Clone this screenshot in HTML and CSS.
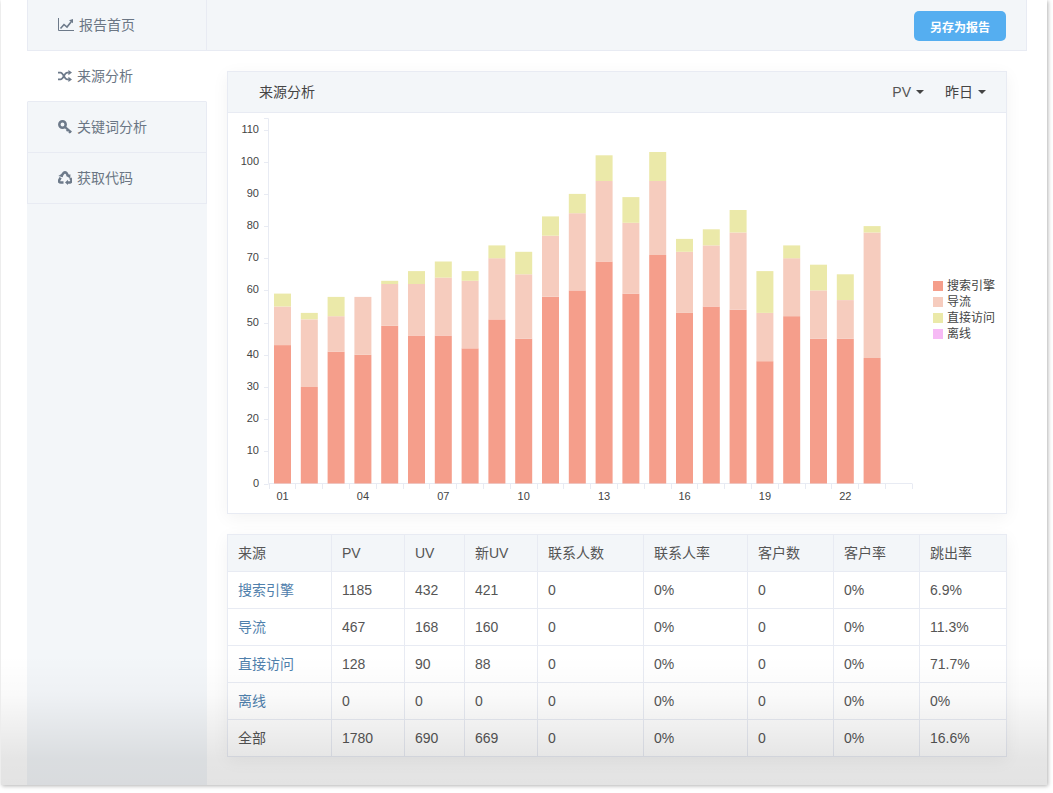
FILE: index.html

```html
<!DOCTYPE html>
<html lang="zh-CN">
<head>
  <meta charset="UTF-8" />
  <title>来源分析</title>
  <link rel="stylesheet" href="styles.css">
</head>
<body>
<div class="window">
  <div class="sidebar">
    <a class="nav-item nav-first">
      <svg class="icon icon-wide" viewBox="0 0 16 13"><path d="M.5 0v12.5H16" fill="none" stroke="currentColor"/><path d="M2.5 10.5 6 6.5l3 2.5 4.2-5.2" fill="none" stroke="currentColor" stroke-width="1.6"/><path d="M11 2.2 15 1v4.2z" fill="currentColor"/></svg>
      报告首页
    </a>
    <a class="nav-item active">
      <svg class="icon" viewBox="0 0 14 12"><path d="M0 2.6h2.6c2.8 0 3.6 6.8 6.6 6.8h1.6M0 9.4h2.6c2.8 0 3.6-6.8 6.6-6.8h1.6" fill="none" stroke="currentColor" stroke-width="1.9"/><path d="M10.4 0 14 2.6l-3.600 2.600zM10.400 6.800 14 9.400 10.400 12z" fill="currentColor"/></svg>
      来源分析
    </a>
    <a class="nav-item">
      <svg class="icon" viewBox="0 0 14 14"><circle cx="4.500" cy="4.500" r="3.200" fill="none" stroke="currentColor" stroke-width="2.500"/><path d="m7 7 6.200 5.400" stroke="currentColor" stroke-width="2.300"/><path d="m10 9.500-1.300 1.700M12.300 11.300l-1.200 1.800" stroke="currentColor" stroke-width="1.700"/></svg>
      关键词分析
    </a>
    <a class="nav-item">
      <svg class="icon" viewBox="0 0 14 14"><g fill="none" stroke="currentColor" stroke-width="2.500"><path d="M3.200 5.400 5.500 2q1.500-1.200 3 0l1.500 2.600"/><path d="m12.300 7 1 2q.7 2-1.300 2.500h-2"/><path d="M5.500 11.600H3q-2.500-.1-1.800-2.400l1.400-2.600"/></g><g fill="currentColor"><path d="m7.800 4.800 4.600-1.600v4.200z"/><path d="M10 8.800v5.200l-3-2.500z"/><path d="m.3 5 4.700 1.300-.8-3.800z"/></g></svg>
      获取代码
    </a>
    <div class="nav-fill"></div>
  </div>

  <div class="main">
    <div class="topbar">
      <button class="save-btn">另存为报告</button>
    </div>

    <div class="panel chart-panel">
      <div class="panel-head">
        <span class="panel-title">来源分析</span>
        <span class="dropdown">PV<i class="caret"></i></span>
        <span class="dropdown dropdown-date">昨日<i class="caret"></i></span>
      </div>
      <svg id="chart" class="chart" viewBox="228 113 778 400"></svg>
    </div>

    <table class="panel report">
      <colgroup>
        <col class="c-source"><col class="c-pv"><col class="c-uv"><col class="c-new">
        <col class="c-contact"><col class="c-rate"><col class="c-cust"><col class="c-crate"><col class="c-bounce">
      </colgroup>
      <thead>
        <tr><th>来源</th><th>PV</th><th>UV</th><th>新UV</th><th>联系人数</th><th>联系人率</th><th>客户数</th><th>客户率</th><th>跳出率</th></tr>
      </thead>
      <tbody>
        <tr><td><a>搜索引擎</a></td><td>1185</td><td>432</td><td>421</td><td>0</td><td>0%</td><td>0</td><td>0%</td><td>6.9%</td></tr>
        <tr><td><a>导流</a></td><td>467</td><td>168</td><td>160</td><td>0</td><td>0%</td><td>0</td><td>0%</td><td>11.3%</td></tr>
        <tr><td><a>直接访问</a></td><td>128</td><td>90</td><td>88</td><td>0</td><td>0%</td><td>0</td><td>0%</td><td>71.7%</td></tr>
        <tr><td><a>离线</a></td><td>0</td><td>0</td><td>0</td><td>0</td><td>0%</td><td>0</td><td>0%</td><td>0%</td></tr>
        <tr><td>全部</td><td>1780</td><td>690</td><td>669</td><td>0</td><td>0%</td><td>0</td><td>0%</td><td>16.6%</td></tr>
      </tbody>
    </table>
  </div>

  <div class="fade"></div>
</div>
<script src="chart.js"></script>
</body>
</html>
```

FILE: styles.css

```css
html, body { margin: 0; padding: 0; height: 100%; overflow: hidden; background: white; }
body { font-family: "Liberation Sans", "Noto Sans CJK SC", sans-serif; font-size: 14px; line-height: 20px; color: #555; }

.window { position: relative; display: flex; width: 1046px; height: 785px; margin-left: 1px; background: white; box-shadow: 1px 1px 4px rgba(0,0,0,.3); overflow: hidden; }
.fade { position: absolute; left: 0; right: 0; bottom: 0; height: 130px; background: linear-gradient(rgba(0,0,0,0), rgba(0,0,0,.02) 30%, rgba(0,0,0,.1) 80%, rgba(0,0,0,.11)); pointer-events: none; }

.sidebar { display: flex; flex-direction: column; width: 180px; margin-left: 26px; }
.nav-item { box-sizing: border-box; display: flex; align-items: center; gap: 5px; height: 51px; padding: 0 0 1px 30px; color: #6b7684; background: #f3f6f9; border: 1px solid #e8ebf3; border-width: 0 1px 1px; }
.nav-item.active { background: white; border-left-color: white; border-right-color: white; }
.nav-fill { flex: 1; background: #f3f6f9; }
.icon { width: 14px; height: 14px; color: #6d7a8a; }
.icon-wide { width: 16px; height: 13px; }

.main { flex: 1; padding-right: 20px; }
.topbar { box-sizing: border-box; display: flex; justify-content: flex-end; align-items: flex-start; height: 51px; padding: 11px 20px 0 0; background: #f3f6f9; border: 1px solid #e8ebf3; border-width: 0 1px 1px 0; }
.save-btn { width: 92px; height: 30px; padding: 0; background: #55aef0; color: white; font: bold 12px "Liberation Sans", "Noto Sans CJK SC", sans-serif; border: none; border-radius: 5px; }

.panel { box-sizing: border-box; width: 780px; margin: 20px 0 0 20px; background: white; border: 1px solid #e8ebf3; box-shadow: 0 4px 16px rgba(0,0,0,.05); }
.panel-head { box-sizing: border-box; display: flex; align-items: center; height: 41px; padding: 0 20px 1px 31px; background: #f3f6f9; border-bottom: 1px solid #e8ebf3; }
.panel-title { flex: 1; color: #444; }
.dropdown { display: flex; align-items: center; gap: 5px; color: #555; }
.dropdown-date { margin-left: 21px; color: #444; }
.caret { width: 0; height: 0; border: 4px solid transparent; border-top-color: #444; border-bottom: 0; }

.chart { display: block; width: 778px; height: 400px; }
.axis { stroke: #e8ebf3; stroke-width: 1; fill: none; }
.tick-label { font-size: 11px; fill: #444; }
.legend-label { font-size: 12px; fill: #444; }

.report { border-collapse: collapse; table-layout: fixed; }
.report th, .report td { box-sizing: border-box; height: 37px; padding: 0 10px 1px; text-align: left; font-weight: normal; border: 1px solid #e8ebf3; }
.report th { background: #f3f6f9; color: #555; }
.report a { color: #4f80ac; }
.c-source { width: 104px; }
.c-pv { width: 73px; }
.c-uv { width: 60px; }
.c-new { width: 73px; }
.c-contact { width: 106px; }
.c-rate { width: 104px; }
.c-cust { width: 86px; }
.c-crate { width: 86px; }
.c-bounce { width: 87px; }
```

FILE: chart.js

```js
// search, guide, direct
const data = [
  [43,12,4],[30,21,2],[41,11,6],[40,18,0],[49,13,1],[46,16,4],[46,18,5],[42,21,3],
  [51,19,4],[45,20,7],[58,19,6],[60,24,6],[69,25,8],[59,22,8],[71,23,9],[53,19,4],
  [55,19,5],[54,24,7],[38,15,13],[52,18,4],[45,15,8],[45,12,8],[39,39,2]
];
const colors = ["#f59e8b", "#f6ccbe", "#ebe9a9"];
const legend = [["搜索引擎", "#f59e8b"], ["导流", "#f6ccbe"], ["直接访问", "#ebe9a9"], ["离线", "#f6baf5"]];

const baseY = 483.5;
const unit = 3.218;
const left = 268.5;
const band = 26.8;

let out = "";
out += `<path class="axis" d="M264 118.500H${left}V${baseY}H912"/>`;

for (let v = 0; v <= 110; v += 10) {
  const y = Math.round(baseY - v * unit) + 0.5;
  out += `<path class="axis" d="M264 ${y}H${left}"/>`;
  out += `<text class="tick-label" x="259" y="${y + 2}" text-anchor="end">${v}</text>`;
}

for (let i = 0; i <= 24; i++) {
  const x = Math.round(left + i * band) + 0.5;
  out += `<path class="axis" d="M${x} ${baseY}V489"/>`;
}

data.forEach((row, i) => {
  const x = left + 5.5 + i * band;
  let total = 0;
  row.forEach((v, k) => {
    if (!v) return;
    total += v;
    out += `<rect x="${x.toFixed(1)}" y="${(baseY - total * unit).toFixed(1)}" width="17" height="${(v * unit).toFixed(1)}" fill="${colors[k]}"/>`;
  });
  if (i % 3 === 0) {
    const name = String(i + 1).padStart(2, "0");
    out += `<text class="tick-label" x="${(x + 8.5).toFixed(1)}" y="500" text-anchor="middle">${name}</text>`;
  }
});

legend.forEach((item, i) => {
  const y = 281 + i * 16;
  out += `<rect x="933" y="${y}" width="10" height="10" fill="${item[1]}"/>`;
  out += `<text class="legend-label" x="947" y="${y + 9}">${item[0]}</text>`;
});

document.getElementById("chart").innerHTML = out;
```
